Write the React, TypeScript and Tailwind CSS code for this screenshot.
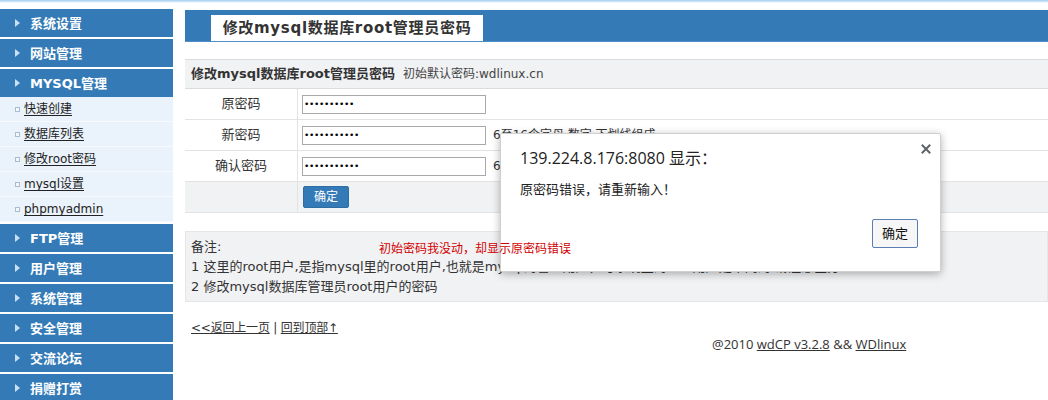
import React from "react";

const headers1 = ["系统设置", "网站管理", "MYSQL管理"];
const subs = ["快速创建", "数据库列表", "修改root密码", "mysql设置", "phpmyadmin"];
const headers2 = ["FTP管理", "用户管理", "系统管理", "安全管理", "交流论坛", "捐赠打赏"];

function Header({ label }: { label: string }) {
  return (
    <div className="h-[28px] bg-[#337ab7] flex items-center pl-[15px]">
      <span className="w-0 h-0 border-y-[4px] border-y-transparent border-l-[5px] border-l-[#c9e0f4]" />
      <span className="ml-[10px] text-[13px] font-bold text-white leading-none">{label}</span>
    </div>
  );
}

function PwdRow({ label, dots, tip }: { label: string; dots: number; tip?: string }) {
  return (
    <div className="flex h-[31px] border-b border-[#e3e3e3]">
      <div className="w-[113px] shrink-0 border-r border-[#e3e3e3] flex items-center justify-center text-[13px] text-[#333]">
        {label}
      </div>
      <div className="flex items-center pl-[4px]">
        <div className="w-[184px] h-[19px] border border-[#a9a9a9] bg-white flex items-center pl-[1px] text-[9px] leading-none text-black tracking-[-0.3px]">
          {"•".repeat(dots)}
        </div>
        {tip && <span className="ml-[7px] text-[12px] text-[#333]">{tip}</span>}
      </div>
    </div>
  );
}

export default function App() {
  return (
    <div className="relative w-[1048px] h-[400px] overflow-hidden bg-white text-[#333] font-['DejaVu_Sans','Noto_Sans_CJK_SC',sans-serif]">
      <div className="h-[3px] bg-linear-to-b from-[#9ccbf0] to-[#ffffff]" />
      <div className="flex pt-[6px]">
        <aside className="w-[173px] shrink-0 flex flex-col">
          {headers1.map((h) => (
            <div key={h} className={h === "MYSQL管理" ? "" : "mb-[2px]"}>
              <Header label={h} />
            </div>
          ))}
          <div className="mb-[2px] bg-[#eaf2fb]">
            {subs.map((s) => (
              <div key={s} className="h-[25px] flex items-center pl-[15px] border-b border-[#f6faff]">
                <span className="w-[5px] h-[5px] border border-[#a7bdd1] bg-[#f4f8fc]" />
                <span className="ml-[4px] text-[12px] text-[#222] underline underline-offset-[2px]">{s}</span>
              </div>
            ))}
          </div>
          {headers2.map((h) => (
            <div key={h} className="mb-[2px]">
              <Header label={h} />
            </div>
          ))}
        </aside>

        <main className="ml-[12px] flex-1 mt-[1px] flex flex-col">
          <div className="h-[32px] bg-[#337ab7] flex items-end pl-[26px] border-b border-[#4f8fc8]">
            <div className="w-[272px] h-[26px] bg-white flex items-center justify-center">
              <span className="text-[15px] font-bold tracking-[0.7px] text-[#333]">修改mysql数据库root管理员密码</span>
            </div>
          </div>

          <div className="mt-[17px] border-t border-[#dcdcdc]">
            <div className="h-[29px] bg-[#f1f2f4] border-b border-[#dcdcdc] flex items-center pl-[6px]">
              <span className="text-[13px] font-bold text-[#333]">修改mysql数据库root管理员密码</span>
              <span className="ml-[8px] text-[12px] text-[#444]">初始默认密码:wdlinux.cn</span>
            </div>
            <PwdRow label="原密码" dots={10} />
            <PwdRow label="新密码" dots={11} tip="6至16个字母,数字,下划线组成" />
            <PwdRow label="确认密码" dots={11} tip="6至16个字母,数字,下划线组成" />
            <div className="flex h-[31px] bg-[#f1f2f4] border-b border-[#e3e3e3]">
              <div className="w-[113px] shrink-0 border-r border-[#e3e3e3]" />
              <div className="flex items-center pl-[5px]">
                <button className="w-[46px] h-[22px] bg-[#337ab7] border border-[#2e6da4] rounded-[2px] text-white text-[12px] leading-none">
                  确定
                </button>
              </div>
            </div>
          </div>

          <div className="mt-[18px] h-[71px] bg-[#f1f2f4] border border-[#e6e6e6] pl-[5px] pt-[5px] text-[13px] leading-[20px] text-[#333]">
            <div>备注:</div>
            <div>1 这里的root用户,是指mysql里的root用户,也就是mysql的管理用户，与系统里的root用户是不同的,请注意区分</div>
            <div>2 修改mysql数据库管理员root用户的密码</div>
          </div>

          <div className="mt-[18px] pl-[6px] text-[12px] leading-[16px] text-[#333] tracking-[-0.2px]">
            <span className="underline">&lt;&lt;返回上一页</span> | <span className="underline">回到顶部↑</span>
          </div>
          <div className="pl-[527px] text-[13px] leading-[16px] text-[#333] font-['Open_Sans','Noto_Sans_CJK_SC',sans-serif]">
            @2010 <span className="underline">wdCP v3.2.8</span> &amp;&amp; <span className="underline">WDlinux</span>
          </div>
        </main>
      </div>

      <div className="absolute left-[500px] top-[133px] w-[441px] h-[139px] bg-white rounded-[2px] border border-[#cfcfcf] shadow-[0_2px_8px_rgba(0,0,0,0.3)] font-['Open_Sans','Noto_Sans_CJK_SC',sans-serif] flex flex-col pl-[19px] pr-[22px] pt-[14px]">
        <svg className="absolute left-[420px] top-[10px]" width="10" height="10" viewBox="0 0 10 10">
          <path d="M1.5 1.5 L8.5 8.5 M8.5 1.5 L1.5 8.5" stroke="#5f6368" strokeWidth="2" strokeLinecap="square" />
        </svg>
        <div className="text-[16px] leading-[20px] text-[#222]">139.224.8.176:8080 显示：</div>
        <div className="mt-[12px] text-[13px] leading-[18px] text-[#222]">原密码错误，请重新输入！</div>
        <div className="mt-[21px] flex justify-end">
          <button className="w-[46px] h-[29px] border border-[#5b7db5] rounded-[2px] bg-[#f6f6f6] text-[13px] text-[#111]">
            确定
          </button>
        </div>
      </div>

      <span className="absolute left-[379px] top-[241px] text-[12px] leading-[16px] text-[#d10000]">
        初始密码我没动，却显示原密码错误
      </span>
    </div>
  );
}
